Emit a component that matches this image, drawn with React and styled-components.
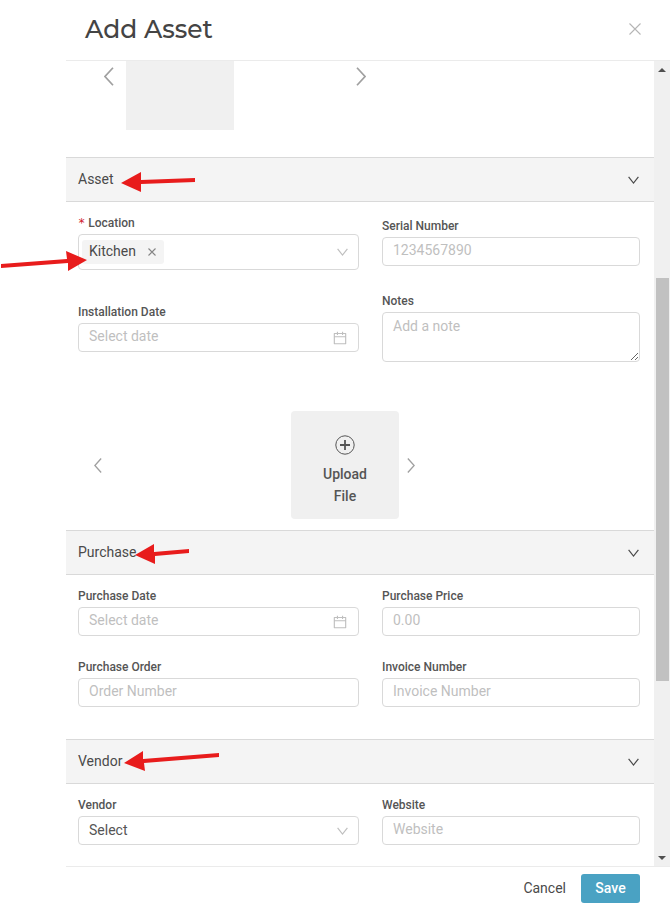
import React from "react";
import styled, { createGlobalStyle } from "styled-components";
import { AiOutlineCalendar } from "react-icons/ai";

const GlobalStyle = createGlobalStyle`
    * {
        box-sizing: border-box;
    }
    body {
        margin: 0;
        background: #ffffff;
        color: #4a4a4a;
        font-family: Roboto, "Liberation Sans", sans-serif;
        font-size: 14px;
        line-height: 22px;
    }
    button,
    input,
    select,
    textarea {
        font: inherit;
        color: inherit;
        margin: 0;
    }
    button {
        display: flex;
        align-items: center;
        justify-content: center;
        padding: 0;
        border: none;
        background: none;
        cursor: pointer;
    }
`;

const Page = styled.div`
    position: relative;
    min-height: 100vh;
    padding-left: 66px;
    overflow: hidden;
    display: flex;
`;

const Drawer = styled.section`
    flex: 1;
    min-width: 0;
    display: flex;
    flex-direction: column;
`;

const Head = styled.header`
    display: flex;
    align-items: center;
    justify-content: space-between;
    height: 61px;
    padding: 0 29px 2px 19px;
    border-bottom: 1px solid #ebebeb;
    h1 {
        margin: 0;
        font-family: Montserrat, Inter, sans-serif;
        font-weight: 500;
        font-size: 25px;
        line-height: 32px;
        color: #444444;
    }
    button {
        color: #b5b5b5;
    }
`;

const Body = styled.div`
    flex: 1;
    display: flex;
`;

const Content = styled.form`
    flex: 1;
    min-width: 0;
`;

const ClippedGallery = styled.div`
    height: 69px;
    margin-bottom: 27px;
    overflow: hidden;
    display: flex;
    align-items: flex-end;
`;

const Gallery = styled.div`
    display: flex;
    align-items: center;
    gap: ${(p) => p.$gap}px;
    padding-left: ${(p) => p.$indent}px;
    padding-bottom: ${(p) => p.$bottom || 0}px;
    color: #a0a0a0;
    > button {
        width: 24px;
        height: 24px;
    }
`;

const Strip = styled.div`
    width: ${(p) => p.$width}px;
    display: flex;
    justify-content: ${(p) => p.$align};
`;

const Tile = styled.div`
    width: 108px;
    height: 108px;
    background: #f0f0f0;
`;

const UploadTile = styled.button`
    && {
        width: 108px;
        height: 108px;
        padding: 12px 24px 0;
        flex-direction: column;
        gap: 8px;
        background: #f0f0f0;
        border-radius: 4px;
        font-weight: 500;
        color: #555555;
    }
`;

const SectionHead = styled.button`
    && {
        width: 100%;
        height: 45px;
        justify-content: space-between;
        padding: 0 15px 0 12px;
        background: #f4f4f4;
        border-top: 1px solid #d9d9d9;
        border-bottom: 1px solid #d9d9d9;
    }
    span {
        padding-bottom: 2px;
    }
`;

const Columns = styled.div`
    display: grid;
    grid-template-columns: 281fr 258fr;
    column-gap: 23px;
    padding: 13px 14px ${(p) => p.$bottom}px 12px;
`;

const Column = styled.div`
    min-width: 0;
    display: flex;
    flex-direction: column;
    gap: ${(p) => p.$gap || 23}px;
    padding-top: ${(p) => p.$top || 0}px;
`;

const FieldBox = styled.div`
    display: flex;
    flex-direction: column;
    gap: 3px;
    label {
        font-weight: 500;
        font-size: 12px;
        line-height: 16px;
        color: #555555;
    }
    label span {
        margin-right: 3px;
        font-family: "DejaVu Sans Mono", monospace;
        line-height: 12px;
        color: #d0202e;
    }
`;

const Control = styled.div`
    display: flex;
    align-items: center;
    height: ${(p) => (p.$tall ? 36 : 29)}px;
    border: 1px solid #d9d9d9;
    border-radius: 4px;
    background: #ffffff;
    color: #bfbfbf;
    input,
    select {
        flex: 1;
        min-width: 0;
        height: 100%;
        padding: 0 10px 3px;
        border: none;
        outline: none;
        background: transparent;
        appearance: none;
    }
    select {
        padding-bottom: 2px;
        color: #555555;
    }
    input {
        color: #4a4a4a;
    }
    input::placeholder {
        color: #bfbfbf;
    }
    > svg {
        flex: none;
        margin-right: 10px;
    }
`;

const Note = styled.textarea`
    display: block;
    width: 100%;
    height: 50px;
    padding: 2px 10px;
    border: 1px solid #d9d9d9;
    border-radius: 4px;
    outline: none;
    resize: vertical;
    &::placeholder {
        color: #bfbfbf;
    }
`;

const Tag = styled.span`
    display: flex;
    align-items: center;
    gap: 12px;
    height: 24px;
    margin-left: 3px;
    padding: 0 8px 0 7px;
    background: #f4f4f4;
    border-radius: 3px;
    color: #4a4a4a;
    > span {
        padding-bottom: 2px;
    }
    button {
        color: #858585;
    }
`;

const Foot = styled.footer`
    display: flex;
    justify-content: flex-end;
    gap: 15px;
    height: 40px;
    padding: 7px 30px 3px;
    border-top: 1px solid #ebebeb;
    button {
        padding-bottom: 2px;
    }
`;

const SaveButton = styled.button`
    && {
        width: 59px;
        background: #4aa2c3;
        border-radius: 3px;
        font-weight: 500;
        color: #ffffff;
    }
`;

const ScrollBar = styled.div`
    width: 16px;
    display: grid;
    grid-template-rows: 17px 200fr 403fr 168fr 17px;
    justify-items: center;
    background: #f0f0f0;
`;

const ScrollArrow = styled.svg`
    grid-row: ${(p) => p.$row};
    align-self: center;
`;

const Thumb = styled.div`
    grid-row: 3;
    width: 13px;
    background: #c1c1c1;
`;

const Arrows = styled.svg`
    position: absolute;
    top: 0;
    left: 0;
    pointer-events: none;
`;

const DownIcon = () => (
    <svg width="11" height="8" viewBox="0 0 11 8" fill="none" stroke="currentColor">
        <path d="M0.6 0.8L5.5 7L10.4 0.8" strokeWidth="1.2" />
    </svg>
);

const SideIcon = ({ height, right }) => (
    <svg
        width={Math.round(height * 0.53)}
        height={height}
        viewBox="0 0 10 19"
        fill="none"
        stroke="currentColor"
        strokeWidth="1.7"
    >
        <path d={right ? "M1 0.7L9 9.5L1 18.3" : "M9 0.7L1 9.5L9 18.3"} />
    </svg>
);

const CrossIcon = ({ size }) => (
    <svg
        width={size}
        height={size}
        viewBox={`0 0 ${size} ${size}`}
        fill="none"
        stroke="currentColor"
        strokeWidth="1.1"
    >
        <path
            d={`M0.5 0.5L${size - 0.5} ${size - 0.5}M${size - 0.5} 0.5L0.5 ${size - 0.5}`}
        />
    </svg>
);

const Field = ({ id, label, required, children }) => (
    <FieldBox>
        <label htmlFor={id}>
            {required && <span>*</span>}
            {label}
        </label>
        {children}
    </FieldBox>
);

const TextField = ({ id, label, placeholder, icon }) => (
    <Field id={id} label={label}>
        <Control>
            <input id={id} type="text" placeholder={placeholder} />
            {icon}
        </Control>
    </Field>
);

const DateField = (props) => (
    <TextField
        {...props}
        placeholder="Select date"
        icon={<AiOutlineCalendar size={16} />}
    />
);

const Section = ({ title }) => (
    <SectionHead type="button" aria-expanded="true">
        <span>{title}</span>
        <DownIcon />
    </SectionHead>
);

const App = () => {
    return (
        <Page>
            <GlobalStyle />
            <Drawer>
                <Head>
                    <h1>Add Asset</h1>
                    <button type="button" aria-label="Close">
                        <CrossIcon size={12} />
                    </button>
                </Head>
                <Body>
                    <Content id="asset-form">
                        <ClippedGallery>
                            <Gallery $indent={31} $gap={5}>
                                <button type="button" aria-label="Previous image">
                                    <SideIcon height={19} />
                                </button>
                                <Strip $width={218} $align="flex-start">
                                    <Tile />
                                </Strip>
                                <button type="button" aria-label="Next image">
                                    <SideIcon height={19} right />
                                </button>
                            </Gallery>
                        </ClippedGallery>

                        <Section title="Asset" />
                        <Columns $bottom={49}>
                            <Column $gap={34}>
                                <Field id="location" label="Location" required>
                                    <Control $tall>
                                        <Tag>
                                            <span>Kitchen</span>
                                            <button
                                                type="button"
                                                aria-label="Remove Kitchen"
                                            >
                                                <CrossIcon size={8} />
                                            </button>
                                        </Tag>
                                        <input id="location" type="text" />
                                        <DownIcon />
                                    </Control>
                                </Field>
                                <DateField
                                    id="installation-date"
                                    label="Installation Date"
                                />
                            </Column>
                            <Column $gap={27} $top={3}>
                                <TextField
                                    id="serial"
                                    label="Serial Number"
                                    placeholder="1234567890"
                                />
                                <Field id="notes" label="Notes">
                                    <Note id="notes" placeholder="Add a note" />
                                </Field>
                            </Column>
                        </Columns>
                        <Gallery $indent={20} $gap={0} $bottom={11}>
                            <button type="button" aria-label="Previous file">
                                <SideIcon height={15} />
                            </button>
                            <Strip $width={289} $align="flex-end">
                                <UploadTile type="button">
                                    <svg
                                        width="20"
                                        height="20"
                                        viewBox="0 0 20 20"
                                        fill="none"
                                        stroke="currentColor"
                                    >
                                        <circle cx="10" cy="10" r="9.2" />
                                        <path d="M10 5v10M5 10h10" strokeWidth="1.8" />
                                    </svg>
                                    <span>Upload File</span>
                                </UploadTile>
                            </Strip>
                            <button type="button" aria-label="Next file">
                                <SideIcon height={15} right />
                            </button>
                        </Gallery>

                        <Section title="Purchase" />
                        <Columns $bottom={32}>
                            <Column>
                                <DateField id="purchase-date" label="Purchase Date" />
                                <TextField
                                    id="order"
                                    label="Purchase Order"
                                    placeholder="Order Number"
                                />
                            </Column>
                            <Column>
                                <TextField
                                    id="price"
                                    label="Purchase Price"
                                    placeholder="0.00"
                                />
                                <TextField
                                    id="invoice"
                                    label="Invoice Number"
                                    placeholder="Invoice Number"
                                />
                            </Column>
                        </Columns>

                        <Section title="Vendor" />
                        <Columns $bottom={21}>
                            <Field id="vendor" label="Vendor">
                                <Control>
                                    <select id="vendor">
                                        <option>Select</option>
                                    </select>
                                    <DownIcon />
                                </Control>
                            </Field>
                            <TextField
                                id="website"
                                label="Website"
                                placeholder="Website"
                            />
                        </Columns>
                    </Content>
                    <ScrollBar aria-hidden="true">
                        <ScrollArrow
                            $row={1}
                            width="8"
                            height="4"
                            viewBox="0 0 8 4"
                            fill="#505050"
                        >
                            <path d="M0 4L4 0L8 4Z" />
                        </ScrollArrow>
                        <Thumb />
                        <ScrollArrow
                            $row={5}
                            width="8"
                            height="4"
                            viewBox="0 0 8 4"
                            fill="#505050"
                        >
                            <path d="M0 0L4 4L8 0Z" />
                        </ScrollArrow>
                    </ScrollBar>
                </Body>
                <Foot>
                    <button type="button">Cancel</button>
                    <SaveButton type="submit" form="asset-form">
                        Save
                    </SaveButton>
                </Foot>
            </Drawer>

            {/* red callout arrows over the form */}
            <Arrows
                width="670"
                height="906"
                viewBox="0 0 670 906"
                fill="#e81c1c"
                aria-hidden="true"
            >
                <path d="M121 183L141 172V180L195 178V182L141 184V192Z" />
                <path d="M87 260L66 251L67 259L1 264V268L68 263V271Z" />
                <path d="M135 555L154 544V552L189 549V553L155 556V564Z" />
                <path d="M124 763L143 751V759L219 753V757L144 763L145 771Z" />
            </Arrows>
        </Page>
    );
};

export default App;
